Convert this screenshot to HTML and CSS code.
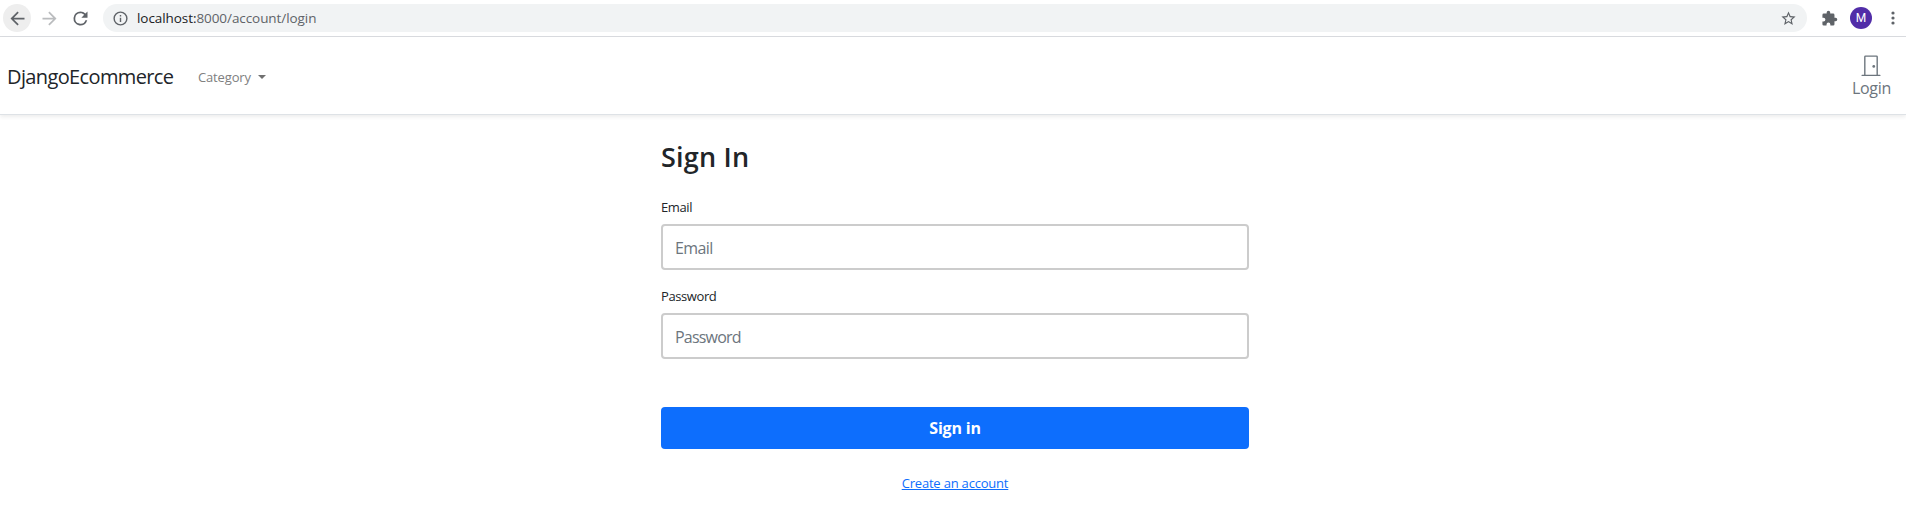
FILE: index.html
```html
<!DOCTYPE html>
<html lang="en">
<head>
<meta charset="utf-8">
<title>Sign In</title>
<link rel="stylesheet" href="styles.css">
</head>
<body>
<div class="toolbar">
  <span class="tool back"><svg width="21" height="21" viewBox="0 0 24 24"><path d="M20 11H7.83l5.59-5.59L12 4l-8 8 8 8 1.41-1.41L7.83 13H20z"/></svg></span>
  <span class="tool forward"><svg width="21" height="21" viewBox="0 0 24 24"><path d="M12 4l-1.41 1.41L16.17 11H4v2h12.17l-5.58 5.59L12 20l8-8z"/></svg></span>
  <span class="tool reload"><svg width="21" height="21" viewBox="0 0 24 24"><path d="M17.65 6.35A7.96 7.96 0 0 0 12 4a8 8 0 1 0 7.73 10h-2.08A6 6 0 1 1 12 6c1.66 0 3.14.69 4.22 1.78L13 11h7V4z"/></svg></span>
  <div class="address">
    <svg class="info" width="17" height="17" viewBox="0 0 24 24"><path d="M11 17h2v-6h-2zm1-15a10 10 0 1 0 0 20 10 10 0 0 0 0-20zm0 18a8 8 0 1 1 0-16 8 8 0 0 1 0 16zM11 9h2V7h-2z"/></svg>
    <span class="url"><b>localhost:</b>8000/account/login</span>
    <svg class="star" width="17" height="17" viewBox="0 0 24 24"><path d="M22 9.24l-7.19-.62L12 2 9.19 8.63 2 9.24l5.46 4.73L5.82 21 12 17.27 18.18 21l-1.63-7.03zM12 15.4l-3.76 2.27 1-4.28-3.32-2.88 4.38-.38L12 6.1l1.71 4.04 4.38.38-3.32 2.88 1 4.28z"/></svg>
  </div>
  <svg class="puzzle" width="17" height="17" viewBox="0 0 24 24"><path d="M20.5 11H19V7a2 2 0 0 0-2-2h-4V3.500a2.500 2.500 0 0 0-5 0V5H4a2 2 0 0 0-1.990 2v3.800H3.500a2.700 2.700 0 0 1 0 5.400H2V20a2 2 0 0 0 2 2h3.800v-1.500a2.700 2.700 0 0 1 5.400 0V22H17a2 2 0 0 0 2-2v-4h1.500a2.500 2.500 0 0 0 0-5z"/></svg>
  <span class="avatar">M</span>
  <svg class="menu" width="4" height="14" viewBox="0 0 4 14"><circle cx="2" cy="2" r="1.600"/><circle cx="2" cy="7" r="1.600"/><circle cx="2" cy="12" r="1.600"/></svg>
</div>
<header class="navbar">
  <a class="brand">DjangoEcommerce</a>
  <a class="category">Category</a><i class="caret"></i>
  <a class="login">
    <svg width="22" height="22" viewBox="0 0 16 16"><path d="M3 2a1 1 0 0 1 1-1h8a1 1 0 0 1 1 1v13h1.500a.5.5 0 0 1 0 1h-13a.5.5 0 0 1 0-1H3V2zm1 13h8V2H4v13z"/><path d="M9 9a1 1 0 1 0 2 0 1 1 0 0 0-2 0z"/></svg>
    <span>Login</span>
  </a>
</header>
<main class="form">
  <h1>Sign In</h1>
  <label class="label-email">Email</label>
  <input class="email" type="text" placeholder="Email">
  <label class="label-password">Password</label>
  <input class="password" type="password" placeholder="Password">
  <button>Sign in</button>
  <a class="create">Create an account</a>
</main>
</body>
</html>
```
FILE: styles.css
```css
* { box-sizing: border-box; }
body { margin: 0; height: 508px; overflow: hidden; background: #fff; color: #212529; font-family: "Open Sans", "Noto Sans", sans-serif; }
svg { display: block; fill: #5f6368; flex: none; }
.toolbar { display: flex; align-items: center; height: 37px; border-bottom: 1px solid #dadce0; padding-left: 3px; }
.tool { display: flex; align-items: center; justify-content: center; width: 28px; height: 28px; border-radius: 50%; margin-right: 4px; }
.back { background: #eee; }
.forward svg { fill: #babcbe; }
.reload { margin-right: 8px; padding-right: 1px; }
.address { display: flex; align-items: center; width: 1704px; height: 28px; border-radius: 14px; background: #f1f3f4; padding: 0 10px 0 9px; }
.url { margin-left: 8px; font-size: 13.5px; letter-spacing: -.07px; color: #5f6368; white-space: nowrap; }
.url b { font-weight: 400; color: #202124; }
.star { margin-left: auto; }
.puzzle { margin-left: 14px; }
.avatar { display: flex; align-items: center; justify-content: center; width: 22px; height: 22px; margin-left: 12px; border-radius: 50%; background: #512da8; color: #fff; font: 12px Roboto, sans-serif; }
.menu { margin-left: 19px; }
.navbar { display: flex; align-items: center; height: 78px; padding: 2px 15px 0 7px; border-bottom: 1px solid #dee2e6; box-shadow: 0 2px 4px rgba(0,0,0,.075); }
.brand { font-size: 20px; letter-spacing: -.63px; width: 191px; }
.category { font-size: 13px; letter-spacing: -.15px; color: #808080; width: 60px; }
.caret { border: 4px solid transparent; border-top-color: #707070; border-bottom: 0; }
.login { margin-left: auto; display: flex; flex-direction: column; align-items: center; color: #6c757d; font-size: 16px; line-height: 24px; letter-spacing: -.3px; }
.login svg { fill: #6c757d; }
.form { width: 588px; margin-left: 661px; padding-top: 25px; display: flex; flex-direction: column; }
h1 { margin: 0; font-size: 27px; line-height: 34px; font-weight: 600; letter-spacing: .2px; }
label { font-size: 13px; line-height: 20px; letter-spacing: -.4px; }
.label-email { margin-top: 23px; }
input { width: 100%; height: 46px; margin: 7px 0 0; padding: 2px 12px 0; border: 2px solid #ccc; border-radius: 4px; background: #fff; font: 16px "Open Sans", sans-serif; letter-spacing: -.77px; }
input::placeholder { color: #6c757d; opacity: 1; }
.email { letter-spacing: -.6px; }
.password { letter-spacing: -.8px; }
.label-password { margin-top: 16px; }
button { height: 42px; margin: 48px 0 0; padding: 0; border: 0; border-radius: 4px; background: #0d6efd; color: #fff; font: 700 16px "Open Sans", sans-serif; letter-spacing: -.2px; }
.create { align-self: center; margin-top: 24px; font-size: 13px; line-height: 20px; letter-spacing: -.2px; color: #0d6efd; text-decoration: underline; }
```
